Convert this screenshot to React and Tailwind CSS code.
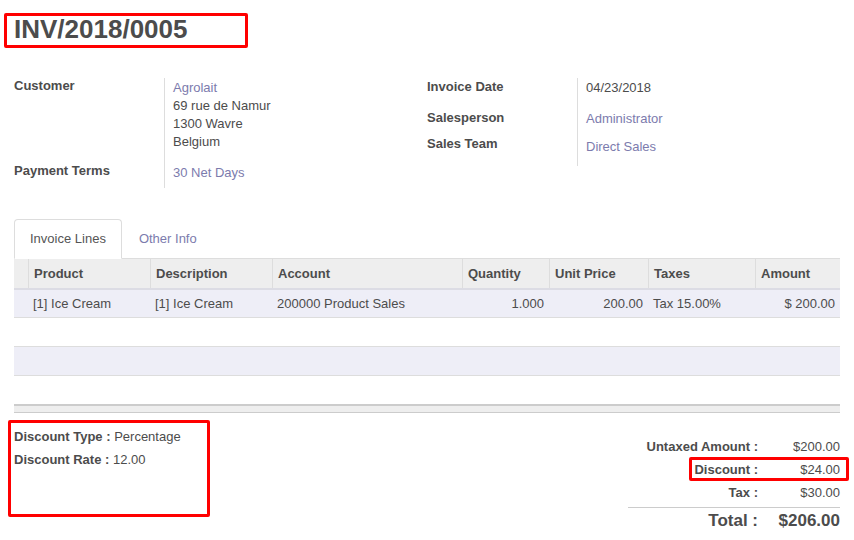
import React from "react";

const F = { fontFamily: '"Liberation Sans", Arial, sans-serif' };

function HeadCell({ children, align = "left", first = false }) {
  return (
    <div
      className={`h-[29px] flex items-center px-[5px] font-bold ${first ? "" : "border-l border-[#dddddd]"} ${align === "right" ? "justify-end" : ""}`}
    >
      {children}
    </div>
  );
}

function Cell({ children, align = "left" }) {
  return (
    <div className={`flex items-center px-[5px] whitespace-nowrap ${align === "right" ? "justify-end" : ""}`}>
      {children}
    </div>
  );
}

const cols = "grid grid-cols-[14px_122px_122px_190px_87px_99px_107px_85px]";

export default function App() {
  return (
    <div style={F} className="w-[854px] h-[540px] bg-white text-[13px] text-[#4c4c4c] px-[14px] overflow-hidden">
      {/* Title */}
      <div className="pt-[13px]">
        <div className="ml-[-10px] w-[244px] h-[35px] border-[3px] border-[#ff0000] rounded-[2px] pl-[7px] flex items-center">
          <h1 className="text-[26px] leading-[29px] font-bold text-[#4c4c4c] mt-[-3px]">INV/2018/0005</h1>
        </div>
      </div>

      {/* Groups */}
      <div className="flex mt-[30px]">
        {/* Left group */}
        <div className="w-[413px] flex">
          <div className="w-[150px] font-bold">
            <div className="h-[83px] leading-[16px]">Customer</div>
            <div className="h-[27px] pt-[2px] leading-[16px]">Payment Terms</div>
          </div>
          <div className="border-l border-[#dddddd] pl-[8px]">
            <div className="h-[83px] pt-[1px] leading-[18px]">
              <div className="text-[#7c7bad]">Agrolait</div>
              <div>69 rue de Namur</div>
              <div>1300 Wavre</div>
              <div>Belgium</div>
            </div>
            <div className="h-[27px] pt-[3px] leading-[18px] text-[#7c7bad]">30 Net Days</div>
          </div>
        </div>
        {/* Right group */}
        <div className="flex">
          <div className="w-[150px] font-bold">
            <div className="h-[31px] pt-[1px] leading-[16px]">Invoice Date</div>
            <div className="h-[27px] pt-[1px] leading-[16px]">Salesperson</div>
            <div className="h-[31px] leading-[16px]">Sales Team</div>
          </div>
          <div className="border-l border-[#dddddd] pl-[8px] self-start">
            <div className="h-[31px] pt-[1px] leading-[18px]">04/23/2018</div>
            <div className="h-[27px] pt-[1px] leading-[18px] text-[#7c7bad]">Administrator</div>
            <div className="h-[30px] pt-[2px] leading-[18px] text-[#7c7bad]">Direct Sales</div>
          </div>
        </div>
      </div>

      {/* Tabs */}
      <div className="mt-[31px] flex border-b border-[#dddddd] h-[40px]">
        <div className="h-[40px] px-[15px] flex items-center border border-[#dddddd] border-b-white bg-white rounded-t-[4px] -mb-px text-[#555555]">
          Invoice Lines
        </div>
        <div className="h-[39px] px-[17px] flex items-center text-[#7c7bad]">Other Info</div>
      </div>

      {/* Table */}
      <div>
        <div className={`${cols} bg-[#eeeeee] border-b-2 border-[#dcdce4]`}>
          <HeadCell first></HeadCell>
          <HeadCell>Product</HeadCell>
          <HeadCell>Description</HeadCell>
          <HeadCell>Account</HeadCell>
          <HeadCell>Quantity</HeadCell>
          <HeadCell>Unit Price</HeadCell>
          <HeadCell>Taxes</HeadCell>
          <HeadCell>Amount</HeadCell>
        </div>
        <div className={`${cols} h-[28px] bg-[#eeeef7] border-b border-[#dddddd]`}>
          <Cell></Cell>
          <Cell>[1] Ice Cream</Cell>
          <Cell>[1] Ice Cream</Cell>
          <Cell>200000 Product Sales</Cell>
          <Cell align="right">1.000</Cell>
          <Cell align="right">200.00</Cell>
          <Cell>Tax 15.00%</Cell>
          <Cell align="right">$ 200.00</Cell>
        </div>
        <div className="h-[29px] border-b border-[#dddddd]"></div>
        <div className="h-[29px] bg-[#eeeef7] border-b border-[#dddddd]"></div>
        <div className="h-[28px]"></div>
        <div className="h-[9px] bg-[#eeeeee] border-t-2 border-b border-[#cccccc]"></div>
      </div>

      {/* Bottom */}
      <div className="flex justify-between items-start">
        <div className="ml-[-6px] mt-[7px] w-[202px] h-[97px] border-[3px] border-[#ff0000] rounded-[2px] pl-[3px] pt-[5px] leading-[18px]">
          <div>
            <span className="font-bold">Discount Type :</span>&nbsp;Percentage
          </div>
          <div className="mt-[5px]">
            <span className="font-bold">Discount Rate :</span> 12.00
          </div>
        </div>

        <div className="relative mt-[22px] w-[212px]">
          <div className="grid grid-cols-[1fr_82px] leading-[23px]">
            <div className="text-right font-bold">Untaxed Amount :</div>
            <div className="text-right">$200.00</div>
            <div className="text-right font-bold">Discount :</div>
            <div className="text-right">$24.00</div>
            <div className="text-right font-bold">Tax :</div>
            <div className="text-right">$30.00</div>
          </div>
          <div className="mt-[3px] border-t border-[#cccccc] grid grid-cols-[1fr_82px] h-[21px] items-center text-[17px] font-bold">
            <div className="text-right">Total :</div>
            <div className="text-right">$206.00</div>
          </div>
          <div className="absolute left-[61px] top-[22px] w-[160px] h-[24px] border-[3px] border-[#ff0000] rounded-[2px]"></div>
        </div>
      </div>
    </div>
  );
}
